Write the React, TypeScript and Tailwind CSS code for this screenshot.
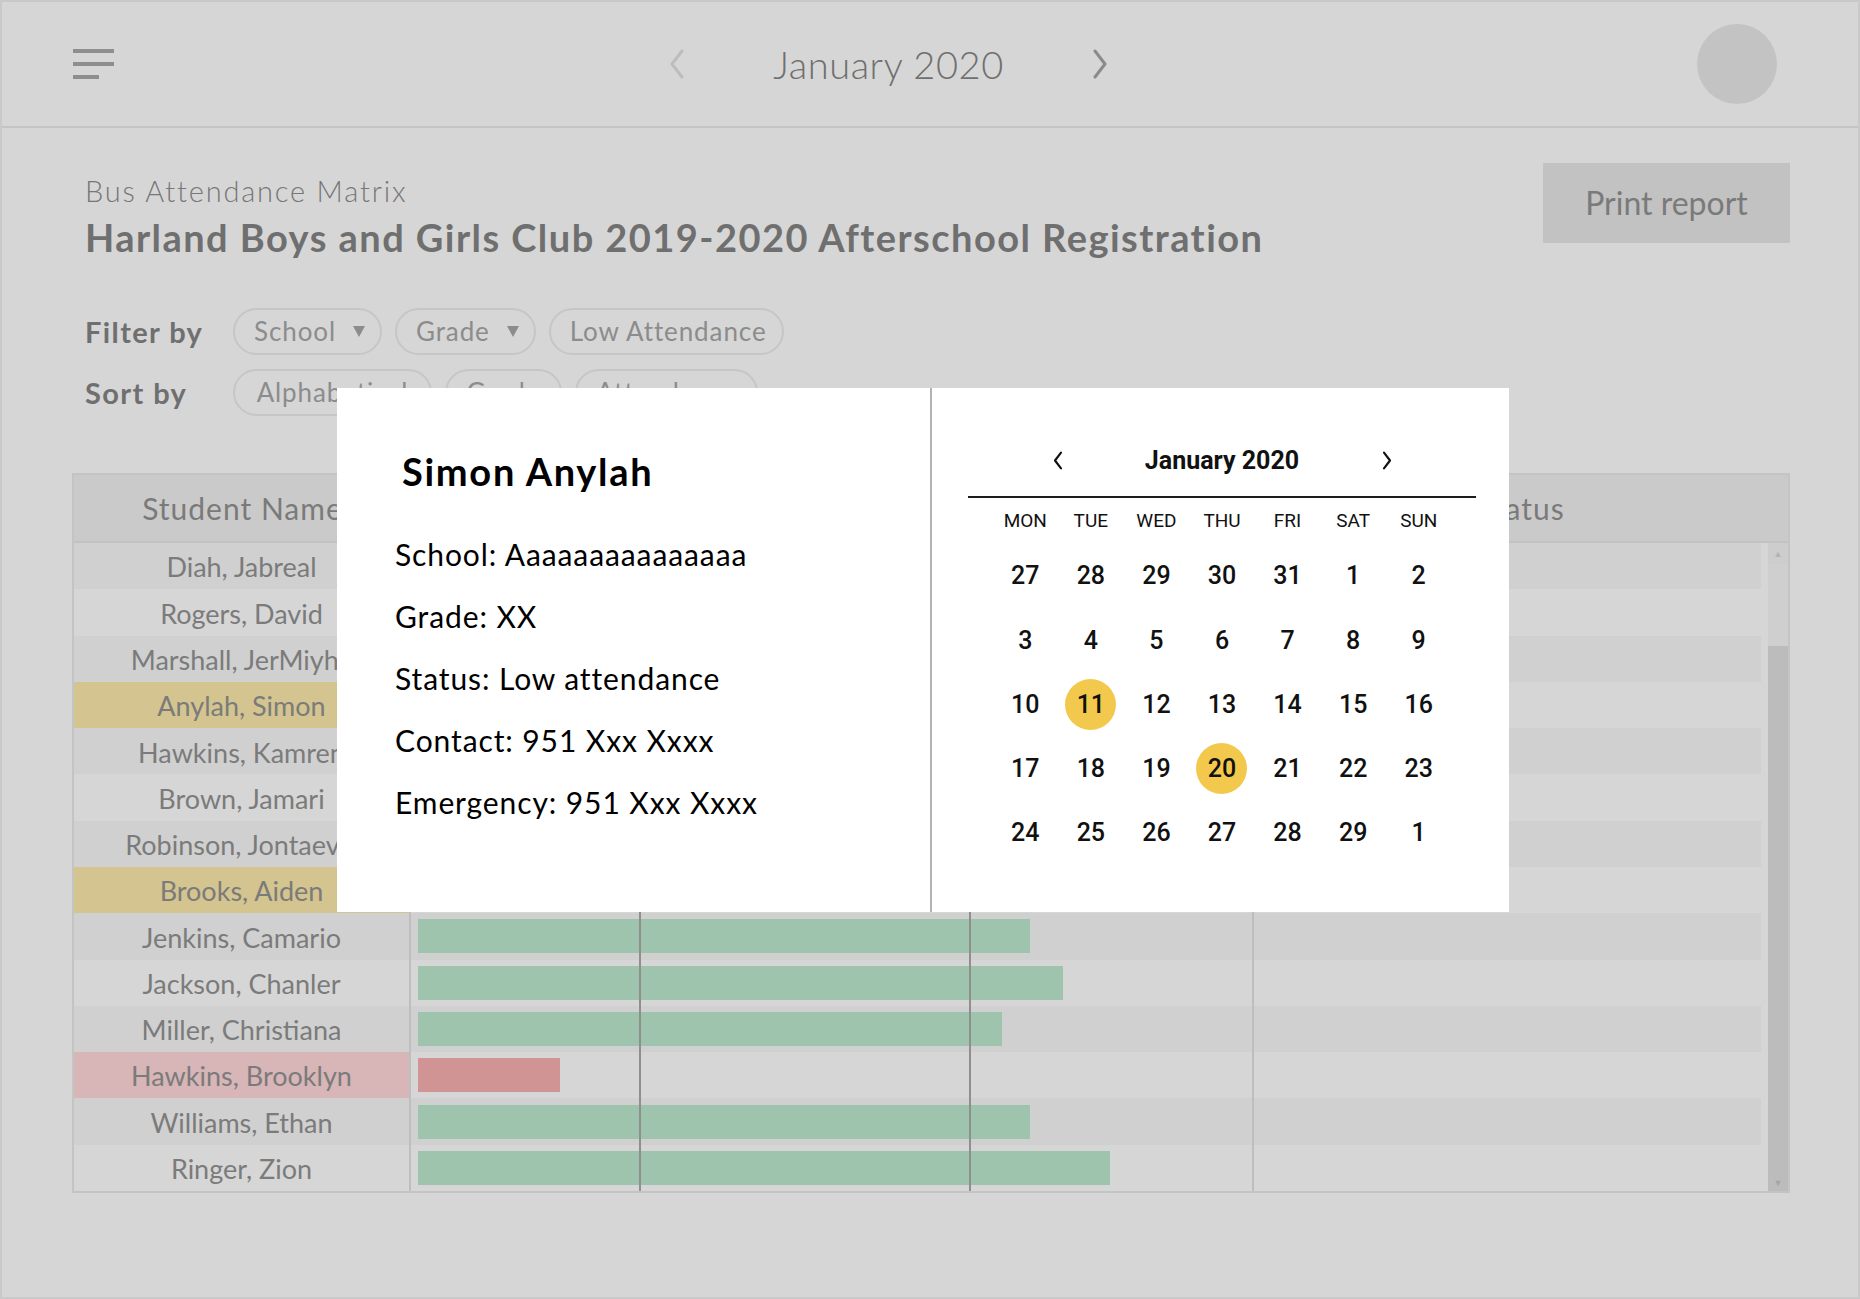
import React from "react";

type Student = {
  name: string;
  bar: number;
  tone?: "tan" | "pink";
};

const students: Student[] = [
  { name: "Diah, Jabreal", bar: 600 },
  { name: "Rogers, David", bar: 640 },
  { name: "Marshall, JerMiyha", bar: 590 },
  { name: "Anylah, Simon", bar: 200, tone: "tan" },
  { name: "Hawkins, Kamren", bar: 620 },
  { name: "Brown, Jamari", bar: 660 },
  { name: "Robinson, Jontaevis", bar: 610 },
  { name: "Brooks, Aiden", bar: 240, tone: "tan" },
  { name: "Jenkins, Camario", bar: 612 },
  { name: "Jackson, Chanler", bar: 645 },
  { name: "Miller, Christiana", bar: 584 },
  { name: "Hawkins, Brooklyn", bar: 142, tone: "pink" },
  { name: "Williams, Ethan", bar: 612 },
  { name: "Ringer, Zion", bar: 692 },
];

const weeks = [
  [27, 28, 29, 30, 31, 1, 2],
  [3, 4, 5, 6, 7, 8, 9],
  [10, 11, 12, 13, 14, 15, 16],
  [17, 18, 19, 20, 21, 22, 23],
  [24, 25, 26, 27, 28, 29, 1],
];

const Chevron = ({ dir, className, weight = 3 }: { dir: "left" | "right"; className?: string; weight?: number }) => (
  <svg viewBox="0 0 20 30" className={className} fill="none" stroke="currentColor" strokeWidth={weight} strokeLinecap="round" strokeLinejoin="round">
    {dir === "left" ? <path d="M15 2 L5 15 L15 28" /> : <path d="M5 2 L15 15 L5 28" />}
  </svg>
);

const Caret = () => (
  <svg viewBox="0 0 12 11" className="w-[12px] h-[11px] text-[#8c8c8c]" fill="currentColor">
    <path d="M0 0 H12 L6 11 Z" />
  </svg>
);

const chipBase =
  "h-[47px] flex items-center border-2 border-[#c6c6c6] rounded-full text-[26px] tracking-[0.9px] text-[#8c8c8c] whitespace-nowrap";

const Chip = ({ label, caret }: { label: string; caret?: boolean }) => (
  <div className={`${chipBase} gap-[17px] pl-[19px] pr-[15px]`}>
    <span>{label}</span>
    {caret && <Caret />}
  </div>
);

const SortChip = ({ label, w }: { label: string; w: string }) => (
  <div className={`${chipBase} justify-center ${w}`}>{label}</div>
);

const Calendar = () => (
  <div className="pl-[36px] pt-[52px]">
    <div className="w-[508px]">
      <div className="h-[40px] flex items-center justify-center gap-[81px] text-[#111]">
        <Chevron dir="left" weight={3.6} className="w-[12px] h-[19px]" />
        <h2 className="text-[25px] font-bold leading-none w-[155px] text-center whitespace-nowrap">
          January 2020
        </h2>
        <Chevron dir="right" weight={3.6} className="w-[12px] h-[19px]" />
      </div>
      <div className="mt-[16px] h-[2px] bg-[#1c1c1c]" />
      <div className="w-[459px] mx-auto">
        <div className="grid grid-cols-7 h-[46px] items-center text-[19px] text-[#111] text-center">
          {["MON", "TUE", "WED", "THU", "FRI", "SAT", "SUN"].map((d) => (
            <span key={d}>{d}</span>
          ))}
        </div>
        {weeks.map((week, wi) => (
          <div key={wi} className="grid grid-cols-7 h-[64.25px] items-center">
            {week.map((day, di) => {
              const marked = (wi === 2 && day === 11) || (wi === 3 && day === 20);
              return (
                <div key={di} className="flex items-center justify-center">
                  <span
                    className={
                      marked
                        ? "w-[51px] h-[51px] rounded-full bg-[#f2c94c] flex items-center justify-center text-[25px] font-medium text-[#111]"
                        : "text-[25px] font-medium text-[#111]"
                    }
                  >
                    {day}
                  </span>
                </div>
              );
            })}
          </div>
        ))}
      </div>
    </div>
  </div>
);

export default function App() {
  return (
    <div
      className="relative w-[1860px] h-[1299px] bg-[#d6d6d6] border-2 border-[#c9c9c9] overflow-hidden"
      style={{ fontFamily: "Lato, 'Open Sans', sans-serif" }}
    >
      {/* top bar */}
      <header className="h-[126px] border-b-2 border-[#c4c4c4] flex items-center">
        <div className="ml-[71px] flex flex-col gap-[9px]">
          <div className="w-[41px] h-[4px] bg-[#8e8e8e]" />
          <div className="w-[41px] h-[4px] bg-[#8e8e8e]" />
          <div className="w-[26px] h-[4px] bg-[#8e8e8e]" />
        </div>
        <div className="ml-[553px] flex items-center">
          <Chevron dir="left" className="w-[20px] h-[30px] text-[#bdbdbd]" />
          <h1 className="mx-[83px] w-[237px] text-center text-[38px] tracking-[0.6px] font-light text-[#6f6f6f] whitespace-nowrap">
            January 2020
          </h1>
          <Chevron dir="right" className="w-[20px] h-[30px] text-[#8a8a8a]" />
        </div>
        <div className="ml-auto mr-[81px] w-[80px] h-[80px] rounded-full bg-[#c3c3c3]" />
      </header>

      <main className="pl-[70px] pr-[68px] pt-[35px]">
        <div className="flex justify-between items-start">
          <div className="pl-[13px] pt-[14px]">
            <p className="text-[29px] leading-[28px] tracking-[1.8px] font-light text-[#777]">Bus Attendance Matrix</p>
            <h2 className="mt-[13px] text-[38px] leading-[38px] tracking-[1.45px] font-bold text-[#6f6f6f] whitespace-nowrap">
              Harland Boys and Girls Club 2019-2020 Afterschool Registration
            </h2>
            <div className="mt-[52px] flex items-center">
              <span className="w-[148px] text-[29px] tracking-[1.4px] font-bold text-[#6f6f6f]">Filter by</span>
              <div className="flex gap-[13px]">
                <Chip label="School" caret />
                <Chip label="Grade" caret />
                <Chip label="Low Attendance" />
              </div>
            </div>
            <div className="mt-[14px] flex items-center">
              <span className="w-[148px] text-[29px] tracking-[1.4px] font-bold text-[#6f6f6f]">Sort by</span>
              <div className="flex gap-[13px]">
                <SortChip label="Alphabetical" w="w-[199px]" />
                <SortChip label="Grade" w="w-[117px]" />
                <SortChip label="Attendance" w="w-[183px]" />
              </div>
            </div>
          </div>
          <button className="w-[247px] h-[80px] bg-[#c2c2c2] text-[32px] text-[#7a7a7a]">Print report</button>
        </div>

        {/* attendance table */}
        <div className="mt-[57px] border-2 border-[#c4c4c4]">
          <div className="h-[68px] flex bg-[#cacaca] border-b-2 border-[#c2c2c2] text-[30px] tracking-[1px] text-[#7a7a7a]">
            <div className="w-[337px] flex items-center justify-center whitespace-nowrap">Student Name</div>
            <div className="w-[843px]" />
            <div className="flex-1 flex items-center justify-center">Status</div>
          </div>
          <div className="flex h-[648px]">
            <div className="relative flex-1 flex flex-col">
              {students.map((s, i) => {
                const stripe = i % 2 === 0 ? "bg-[#d0d0d0]" : "bg-[#d6d6d6]";
                const nameBg = s.tone === "tan" ? "bg-[#d4c48f]" : s.tone === "pink" ? "bg-[#d8b5b7]" : stripe;
                return (
                  <div key={i} className="flex-1 flex">
                    <div
                      className={`w-[335px] flex items-center justify-center pt-[3px] text-[27px] text-[#7b7b7b] whitespace-nowrap overflow-hidden ${nameBg}`}
                    >
                      {s.name}
                    </div>
                    <div className="w-[2px] bg-[#bebebe]" />
                    <div className={`w-[841px] flex items-center pl-[7px] ${stripe}`}>
                      <div
                        className={`h-[34px] ${s.tone === "pink" ? "bg-[#cf9493]" : "bg-[#9ec4ae]"}`}
                        style={{ width: s.bar }}
                      />
                    </div>
                    <div className="w-[2px] bg-[#bebebe]" />
                    <div className="flex-1 pr-[7px]">
                      <div className={`h-full ${stripe}`} />
                    </div>
                  </div>
                );
              })}
              <div className="absolute top-0 bottom-0 left-[565px] w-[2px] bg-[#8f8f8f]" />
              <div className="absolute top-0 bottom-0 left-[895px] w-[2px] bg-[#8f8f8f]" />
            </div>
            {/* scrollbar */}
            <div className="w-[20px] flex flex-col">
              <div className="h-[21px] bg-[#cdcdcd] flex items-center justify-center text-[9px] text-[#b3b3b3]">▲</div>
              <div className="h-[82px] bg-[#cfcfcf]" />
              <div className="flex-1 bg-[#bcbcbc] flex flex-col justify-end items-center pb-[2px] text-[9px] text-[#a6a6a6]">
                ▼
              </div>
            </div>
          </div>
        </div>
      </main>

      {/* student detail popover */}
      <div className="absolute left-[335px] top-[386px] w-[1172px] h-[524px] bg-white flex">
        <div className="w-[593px] pt-[64px] pl-[58px] text-black">
          <h3 className="ml-[7px] text-[38px] leading-[38px] tracking-[1.7px] font-bold">Simon Anylah</h3>
          <div className="mt-[33px] text-[30px] leading-[62px] tracking-[0.9px]">
            <p>School: Aaaaaaaaaaaaaaa</p>
            <p>Grade: XX</p>
            <p>Status: Low attendance</p>
            <p>Contact: 951 Xxx Xxxx</p>
            <p>Emergency: 951 Xxx Xxxx</p>
          </div>
        </div>
        <div className="w-[2px] bg-[#b3b3b3]" />
        <div className="flex-1" style={{ fontFamily: "Roboto, sans-serif" }}>
          <Calendar />
        </div>
      </div>
    </div>
  );
}
